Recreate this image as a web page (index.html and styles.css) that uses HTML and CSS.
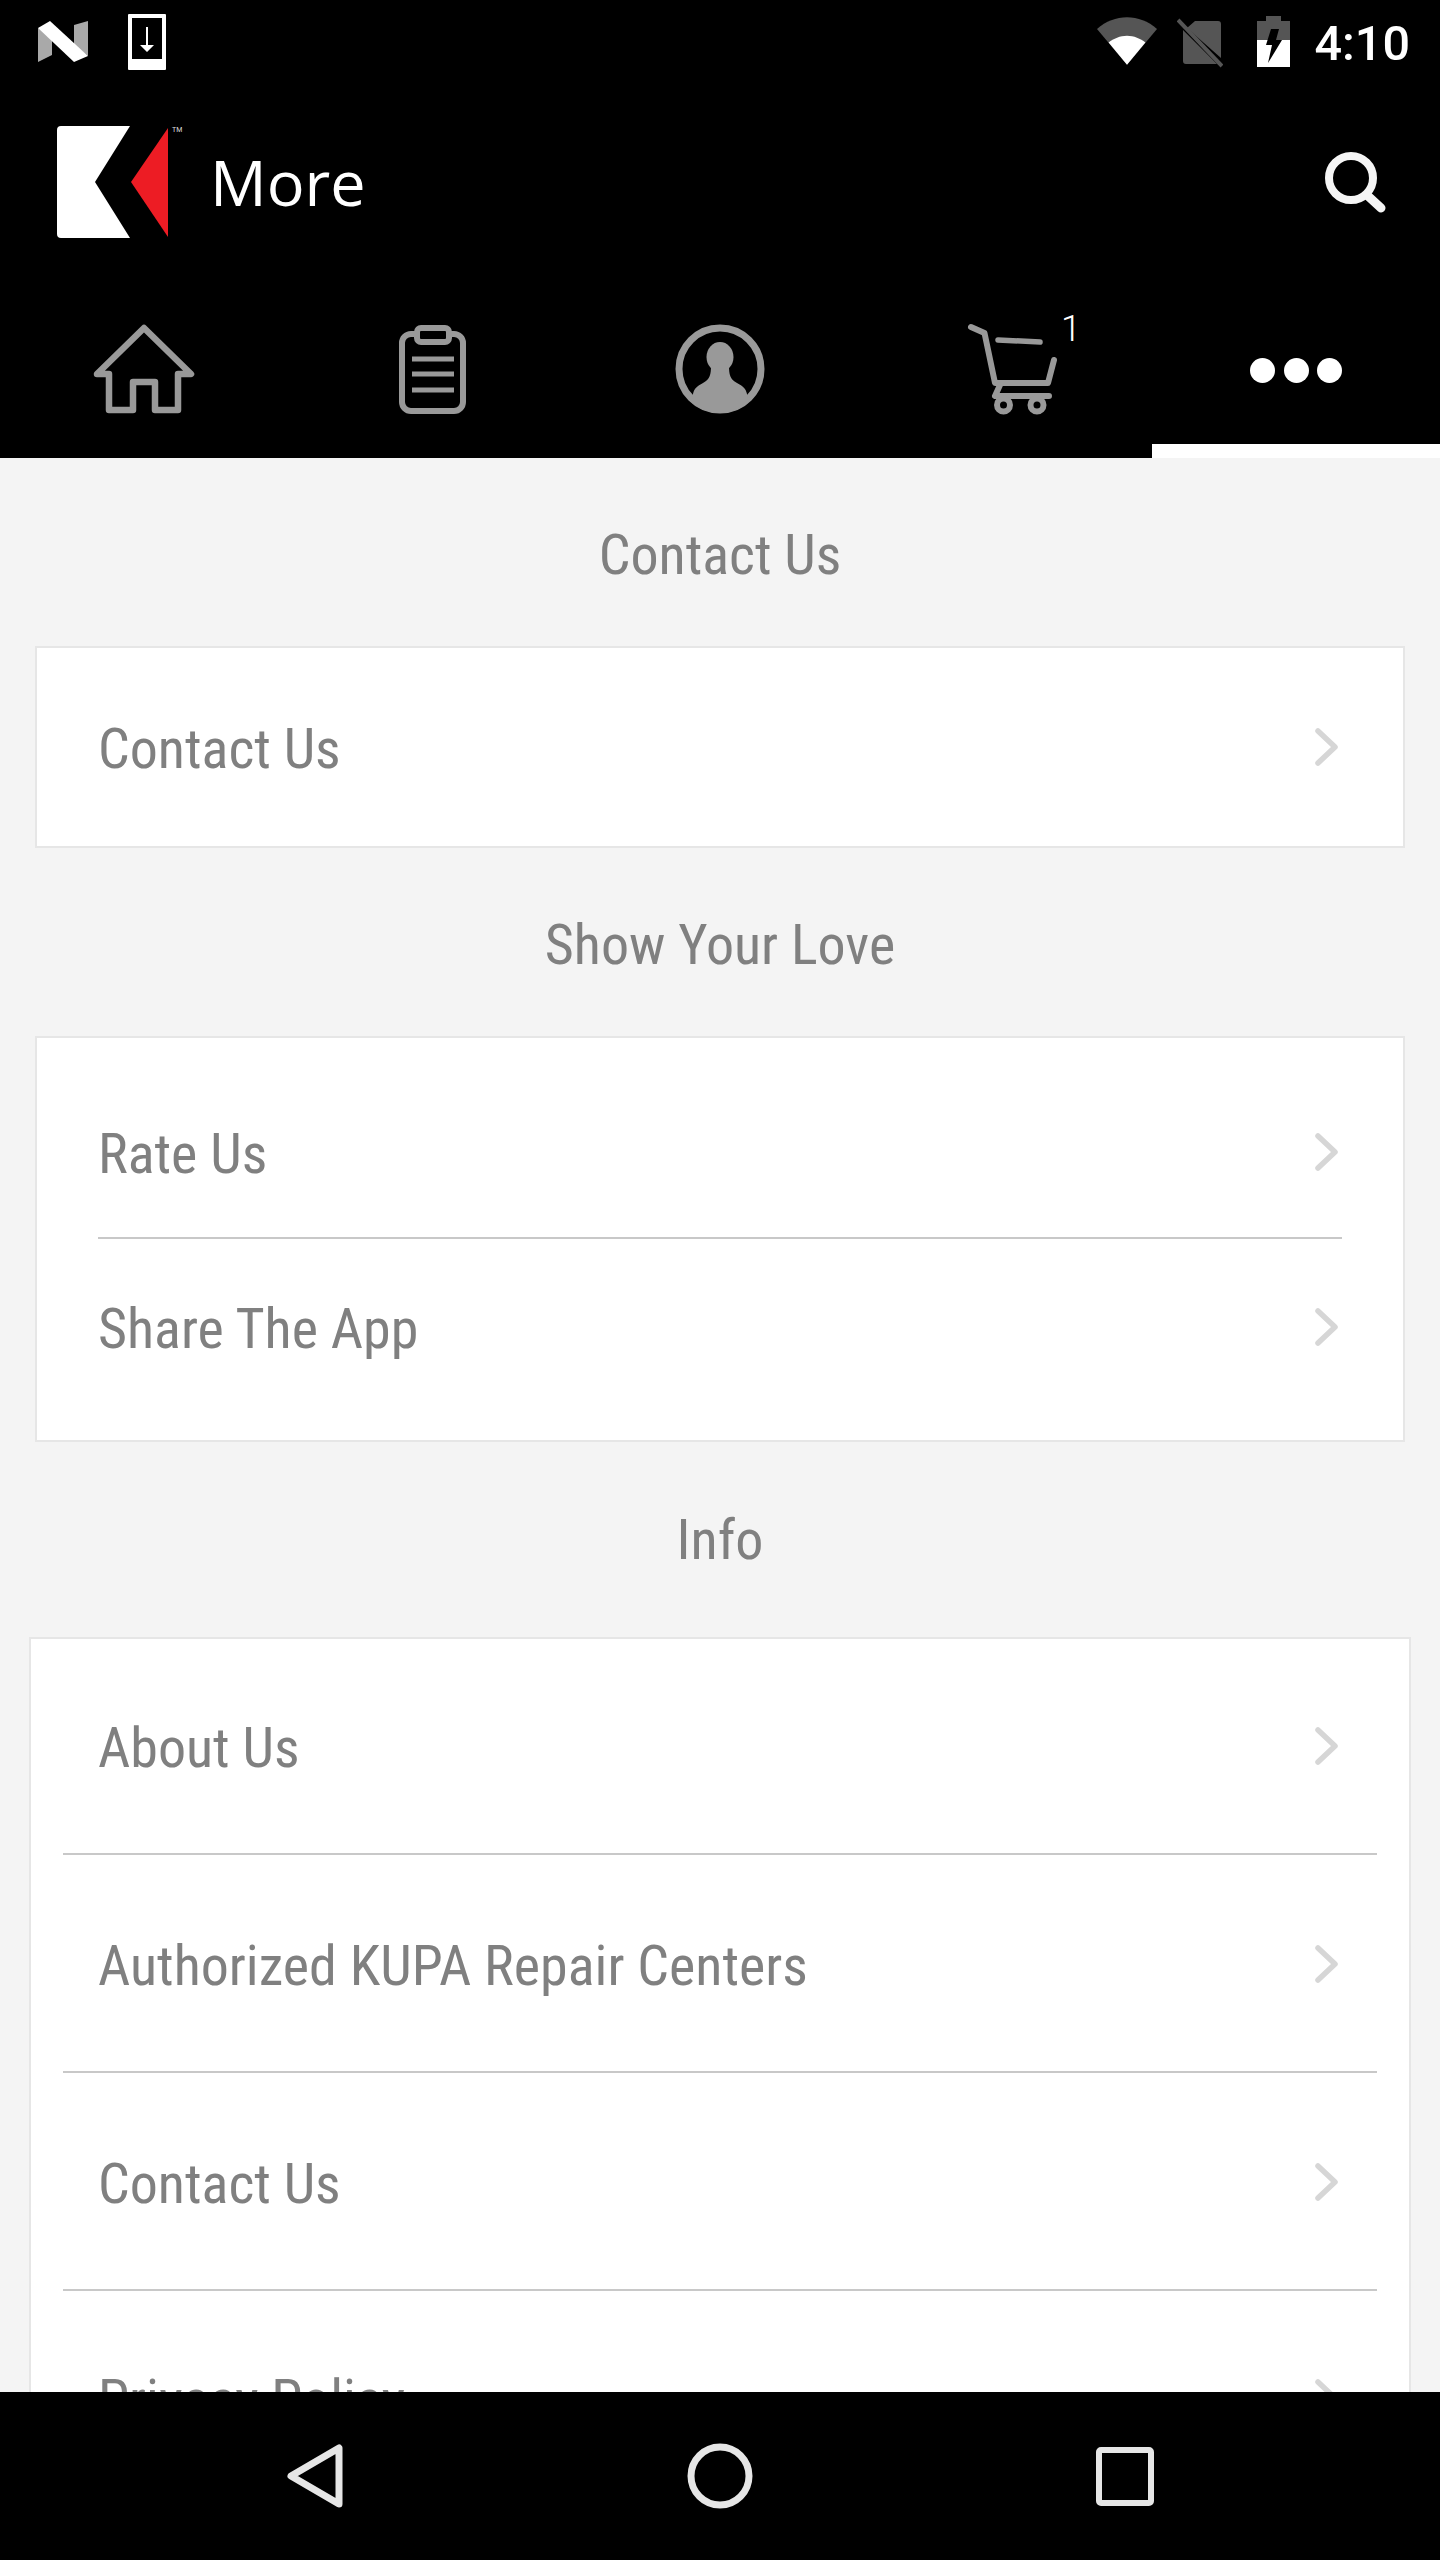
FILE: index.html
```
<!DOCTYPE html>
<html lang="en">
<head>
<meta charset="utf-8">
<title>More</title>
<link rel="stylesheet" href="styles.css">
</head>
<body>
<div class="screen">
  <header class="top">
    <div class="status">
      <div class="status-left">
        <svg class="ic-n" viewBox="0 0 50 41"><polygon fill="#a9a9a9" points="0,7 14,16 14,34 0,41"/><polygon fill="#a9a9a9" points="36,4 50,0 50,35 36,24"/><polygon fill="#fff" points="0,7 12,0 50,35 36,41"/></svg>
        <svg class="ic-dl" viewBox="0 0 38 56"><path fill="#fff" fill-rule="evenodd" d="M0 1a1 1 0 0 1 1-1h36a1 1 0 0 1 1 1v54a1 1 0 0 1-1 1H1a1 1 0 0 1-1-1zM4 4v41h30V4z"/><path fill="#fff" d="M18 13h2v18h6l-7 7-7-7h6z"/></svg>
      </div>
      <div class="status-right">
        <svg class="ic-wifi" viewBox="0 0 62 50"><path fill="#555" d="M31 49 0 12C9 4 20 0 31 0s22 4 31 12z"/><path fill="#fff" d="M31 49 12 26c5-4 12-7 19-7s14 3 19 7z"/></svg>
        <svg class="ic-sim" viewBox="0 0 46 50"><path fill="#555" d="M18 3h23a3 3 0 0 1 3 3v34L10 10zM6 12l34 34H9a3 3 0 0 1-3-3z"/><path stroke="#555" stroke-width="4" d="M1 2l44 46"/></svg>
        <svg class="ic-bat" viewBox="0 0 33 51"><path fill="#555" d="M9 0h15v5h9v20H0V5h9z"/><path fill="#fff" d="M0 24h33v27H0z"/><path fill="#000" d="M14 13h8l-3 11h6L11 47l4-18H9z"/></svg>
        <span class="clock">4:10</span>
      </div>
    </div>
    <div class="appbar">
      <div class="brand">
        <svg class="logo" viewBox="0 0 111 113"><path fill="#fff" d="M4 0h69L38 56l35 56H4a4 4 0 0 1-4-4V4a4 4 0 0 1 4-4z"/><polygon fill="#ed1c24" points="111,2 74,56 111,111"/></svg>
        <span class="tm">TM</span>
        <span class="page-title">More</span>
      </div>
      <svg class="ic-search" viewBox="0 0 62 62"><circle cx="26" cy="27" r="22" fill="none" stroke="#f5f5f5" stroke-width="8"/><path stroke="#f5f5f5" stroke-width="9" stroke-linecap="round" d="M43 45l13 12"/></svg>
    </div>
    <nav class="tabs">
      <div class="tab">
        <svg class="tab-ic" viewBox="0 0 110 100"><path fill="none" stroke="#999" stroke-width="6.500" stroke-linejoin="round" d="M20 54H8L55 8l47 46H89v36H66V62H44v28H20z"/></svg>
      </div>
      <div class="tab">
        <svg class="tab-ic" viewBox="0 0 110 100"><rect x="25" y="14" width="61" height="77" rx="9" fill="none" stroke="#999" stroke-width="6"/><rect x="40" y="8" width="32" height="14" rx="4" fill="#000" stroke="#999" stroke-width="6"/><path stroke="#999" stroke-width="5" d="M35 39h42M35 54h42M35 70h42"/></svg>
      </div>
      <div class="tab">
        <svg class="tab-ic" viewBox="0 0 110 100"><defs><clipPath id="ring"><circle cx="55" cy="49" r="44"/></clipPath></defs><circle cx="55" cy="49" r="41" fill="none" stroke="#999" stroke-width="7"/><g clip-path="url(#ring)" fill="#999"><ellipse cx="55" cy="37" rx="13.500" ry="15"/><path d="M46 45h18c0 10 1 14 8 18 6 3 9 6 10 11l4 25H24l4-25c1-5 4-8 10-11 7-4 8-8 8-18z"/></g></svg>
      </div>
      <div class="tab tab-cart">
        <svg class="tab-ic" viewBox="0 0 110 100"><g fill="none" stroke="#999" stroke-width="6" stroke-linecap="round" stroke-linejoin="round"><path d="M18 7l13.500 6L42 63h53l6-23"/><path d="M45 20l42 2" stroke-width="5.500"/><path d="M47 65l-5 11h54"/><circle cx="50.500" cy="85" r="6.500"/><circle cx="84" cy="85" r="6.500"/></g></svg>
        <span class="cart-count">1</span>
      </div>
      <div class="tab tab-active">
        <span class="dot"></span><span class="dot"></span><span class="dot"></span>
      </div>
    </nav>
  </header>

  <main class="content">
    <h2 class="section-title"><span class="narrow-c">Contact Us</span></h2>
    <section class="card">
      <div class="row row-single"><span class="narrow">Contact Us</span><svg class="chev" viewBox="0 0 24 38"><path d="M4 3l17 16L4 35"/></svg></div>
    </section>
    <h2 class="section-title"><span class="narrow-c">Show Your Love</span></h2>
    <section class="card">
      <div class="row row-first line"><span class="narrow">Rate Us</span><svg class="chev" viewBox="0 0 24 38"><path d="M4 3l17 16L4 35"/></svg></div>
      <div class="row row-last"><span class="narrow">Share The App</span><svg class="chev" viewBox="0 0 24 38"><path d="M4 3l17 16L4 35"/></svg></div>
    </section>
    <h2 class="section-title section-title-info"><span class="narrow-c">Info</span></h2>
    <section class="card card-wide">
      <div class="row row-info row-info-first line"><span class="narrow">About Us</span><svg class="chev" viewBox="0 0 24 38"><path d="M4 3l17 16L4 35"/></svg></div>
      <div class="row row-info line"><span class="narrow">Authorized KUPA Repair Centers</span><svg class="chev" viewBox="0 0 24 38"><path d="M4 3l17 16L4 35"/></svg></div>
      <div class="row row-info line"><span class="narrow">Contact Us</span><svg class="chev" viewBox="0 0 24 38"><path d="M4 3l17 16L4 35"/></svg></div>
      <div class="row row-info row-info-last"><span class="narrow">Privacy Policy</span><svg class="chev" viewBox="0 0 24 38"><path d="M4 3l17 16L4 35"/></svg></div>
    </section>
  </main>

  <footer class="navbar">
    <svg class="nav-ic" viewBox="0 0 60 70"><path fill="none" stroke="#e6e6e6" stroke-width="7" stroke-linejoin="round" d="M6 35 54 7v56z"/></svg>
    <svg class="nav-ic" viewBox="0 0 70 70"><circle cx="35" cy="35" r="29" fill="none" stroke="#e6e6e6" stroke-width="7"/></svg>
    <svg class="nav-ic" viewBox="0 0 70 70"><rect x="9" y="9" width="52" height="53" rx="2" fill="none" stroke="#e6e6e6" stroke-width="6"/></svg>
  </footer>
</div>
</body>
</html>
```
FILE: styles.css
```
* { box-sizing: border-box; }
html, body { margin: 0; padding: 0; }
body { background: #000; font-family: Roboto, "Liberation Sans", sans-serif; }
.screen { width: 1440px; height: 2560px; display: flex; flex-direction: column; overflow: hidden; background: #f4f4f4; }

.top { background: #000; height: 458px; flex: none; display: flex; flex-direction: column; }
.status { height: 84px; display: flex; justify-content: space-between; padding: 14px 30px 0 38px; }
.status-left { display: flex; gap: 40px; align-items: flex-start; }
.ic-n { width: 50px; height: 41px; margin-top: 7px; }
.ic-dl { width: 38px; height: 56px; }
.status-right { display: flex; align-items: flex-start; }
.ic-wifi { width: 60px; height: 49px; margin-top: 3px; }
.ic-sim { width: 46px; height: 50px; margin: 4px 0 0 20px; }
.ic-bat { width: 33px; height: 51px; margin: 2px 0 0 34px; }
.clock { color: #fff; font-size: 48.500px; font-weight: 500; line-height: 60px; margin-left: 25px; }

.appbar { height: 188px; display: flex; align-items: center; justify-content: space-between; padding: 8px 53px 0 57px; }
.brand { display: flex; align-items: center; position: relative; }
.logo { width: 111px; height: 113px; }
.tm { position: absolute; left: 115px; top: 0; color: #ddd; font-size: 7px; line-height: 8px; }
.page-title { color: #fff; font-family: "Open Sans", sans-serif; font-size: 63px; line-height: 80px; margin-left: 42px; }
.ic-search { width: 62px; height: 62px; }

.tabs { flex: 1; display: grid; grid-template-columns: repeat(5, 288px); }
.tab { display: flex; align-items: center; justify-content: center; position: relative; padding-top: 10px; }
.tab-ic { width: 110px; height: 100px; }
.cart-count { position: absolute; left: 197px; top: 40px; color: #fff; font-size: 36px; font-weight: 300; line-height: 34px; }
.tab-active { gap: 8.500px; border-bottom: 14px solid #fff; padding-top: 24px; }
.dot { width: 25px; height: 25px; border-radius: 50%; background: #fff; }

.content { flex: 1; min-height: 0; overflow: hidden; padding: 0 35px; }
.section-title { margin: 0; height: 188px; display: flex; align-items: center; justify-content: center; color: #808080; font-size: 56px; font-weight: 400; line-height: 60px; font-stretch: 75%; padding-top: 5px; }
.section-title-info { height: 195px; padding-top: 0; }
.card { background: #fff; border: 2px solid #e6e6e6; }
.card-wide { margin: 0 -6px; }
.row { display: flex; align-items: center; justify-content: space-between; color: #808080; font-size: 56px; line-height: 60px; font-stretch: 75%; margin: 0 61px; }
.card-wide .row { margin: 0 32px; padding-left: 35px; padding-right: 35px; }
.line { border-bottom: 2px solid #c8c8c8; }
.row-single { padding-top: 71px; padding-bottom: 67px; }
.row-first { padding-top: 86px; padding-bottom: 53px; }
.row-last { padding-top: 60px; padding-bottom: 81px; }
.row-info { padding-top: 81px; padding-bottom: 75px; }
.row-info-first { padding-top: 79px; }
.row-info-last { padding-top: 79px; }
.narrow, .narrow-c { display: inline-block; white-space: nowrap; }
.chev { width: 24px; height: 38px; flex: none; margin-right: 4px; margin-bottom: 4px; }
.chev path { fill: none; stroke: #d6d6d6; stroke-width: 5.500; stroke-linecap: round; stroke-linejoin: round; }

.navbar { height: 168px; flex: none; background: #000; display: flex; align-items: center; justify-content: center; gap: 335px; position: relative; }
.nav-ic { width: 70px; height: 70px; }
```
